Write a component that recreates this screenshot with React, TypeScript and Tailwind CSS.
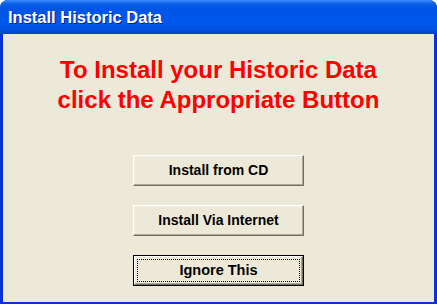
export default function App() {
  const btn =
    'w-[171px] h-[31px] bg-[#ece9d8] border border-t-white border-l-white border-r-[#716f64] border-b-[#716f64] shadow-[inset_-1px_-1px_0_#aca899,inset_1px_1px_0_#f1efe2] text-[14px] font-bold text-black flex items-center justify-center';

  return (
    <div className="w-[437px] h-[304px] flex flex-col bg-[#0831d9] rounded-t-[8px] overflow-hidden font-['Liberation_Sans',Arial,sans-serif]">
      <div className="h-[34px] shrink-0 flex items-center pl-[8px] bg-[linear-gradient(to_bottom,#3a8cff_0px,#0a5fe8_4px,#0055e5_8px,#0058ee_24px,#0052dd_30px,#0040c8_34px)]">
        <span className="text-white text-[16.5px] font-bold [text-shadow:1px_1px_0_#0a1e8c]">
          Install Historic Data
        </span>
      </div>
      <div className="flex-1 mx-[3px] mb-[2px] bg-[#ece9d8] flex flex-col items-center">
        <div className="mt-[21px] text-[#ff0000] text-[24px] font-bold leading-[30px] text-center">
          <div>To Install your Historic Data</div>
          <div>click the Appropriate Button</div>
        </div>
        <div className="mt-[40px] flex flex-col gap-[19px]">
          <button className={btn}>Install from CD</button>
          <button className={btn}>Install Via Internet</button>
          <div className="w-[171px] h-[31px] border border-black">
            <button className="w-full h-full bg-[#ece9d8] border border-t-white border-l-white border-r-[#716f64] border-b-[#716f64] shadow-[inset_-1px_-1px_0_#aca899] text-[14.5px] font-bold text-black flex items-center justify-center p-[2px]">
              <span className="w-full h-full border border-dotted border-black flex items-center justify-center">
                Ignore This
              </span>
            </button>
          </div>
        </div>
      </div>
    </div>
  );
}
